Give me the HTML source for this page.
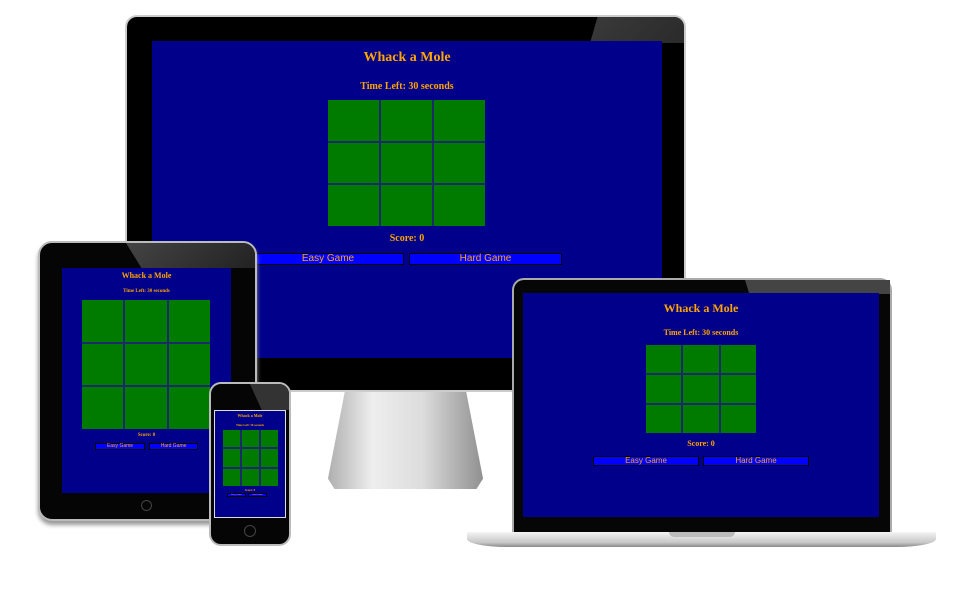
<!DOCTYPE html>
<html><head><meta charset="utf-8"><style>
*{margin:0;padding:0;box-sizing:border-box}
body{width:964px;height:601px;background:#fff;position:relative;overflow:hidden;font-family:"Liberation Serif",serif}
.a{position:absolute}
.scr{position:absolute;background:#00008b;overflow:hidden}
.t{position:absolute;left:0;right:0;text-align:center;color:#ffa500;font-weight:bold;white-space:nowrap}
.g{position:absolute;display:grid;grid-template-columns:1fr 1fr 1fr;grid-template-rows:1fr 1fr 1fr;gap:2px;background:#1a2a6a}
.g div{background:#007b00}
.b{position:absolute;background:#0000ff;color:#ffa500;font-family:"Liberation Sans",sans-serif;text-align:center;white-space:nowrap;border:1px solid #000}
</style></head><body>

<!-- Monitor -->
<div class="a" style="left:323px;top:385px;width:165px;height:104px;background:linear-gradient(90deg,#a8a8a8,#eee 30%,#ddd 60%,#8a8a8a);clip-path:polygon(14% 0,86% 0,97% 90%,93% 100%,7% 100%,3% 90%)"></div>
<div class="a" style="left:125px;top:15px;width:561px;height:377px;background:#000;border:2px solid #ccc;border-radius:12px"></div>
<div class="a" style="left:590px;top:17px;width:94px;height:26px;background:linear-gradient(135deg,#3a3a3a,#2a2a2a);clip-path:polygon(8% 0,100% 0,100% 100%,0 100%);border-radius:0 10px 0 0"></div>
<div class="scr" style="left:152px;top:41px;width:510px;height:317px">
 <div class="t" style="top:9px;font-size:14px">Whack a Mole</div>
 <div class="t" style="top:40px;font-size:10px">Time Left: 30 seconds</div>
 <div class="g" style="left:176px;top:59px;width:157px;height:126px"><div></div><div></div><div></div><div></div><div></div><div></div><div></div><div></div><div></div></div>
 <div class="t" style="top:192px;font-size:10px">Score: 0</div>
 <div class="b" style="left:100px;top:212px;width:152px;height:12px;font-size:10px;line-height:10px">Easy Game</div>
 <div class="b" style="left:257px;top:212px;width:153px;height:12px;font-size:10px;line-height:10px">Hard Game</div>
</div>

<!-- Tablet -->
<div class="a" style="left:38px;top:241px;width:219px;height:280px;background:#050505;border:2px solid #bbb;border-radius:14px;box-shadow:0 4px 4px #999"></div>
<div class="a" style="left:126px;top:243px;width:129px;height:25px;background:linear-gradient(135deg,#444,#222);clip-path:polygon(0 0,100% 0,100% 100%,12% 100%);border-radius:0 12px 0 0"></div>
<div class="scr" style="left:62px;top:268px;width:169px;height:225px">
 <div class="t" style="top:3px;font-size:8px">Whack a Mole</div>
 <div class="t" style="top:21px;font-size:5px">Time Left: 30 seconds</div>
 <div class="g" style="left:20px;top:32px;width:128px;height:129px"><div></div><div></div><div></div><div></div><div></div><div></div><div></div><div></div><div></div></div>
 <div class="t" style="top:165px;font-size:5px">Score: 0</div>
 <div class="b" style="left:33px;top:175px;width:50px;height:7px;font-size:5px;line-height:5px">Easy Game</div>
 <div class="b" style="left:87px;top:175px;width:49px;height:7px;font-size:5px;line-height:5px">Hard Game</div>
</div>
<div class="a" style="left:141px;top:500px;width:11px;height:11px;border:1px solid #444;border-radius:50%"></div>

<!-- Phone -->
<div class="a" style="left:209px;top:382px;width:82px;height:164px;background:#050505;border:2px solid #bbb;border-radius:12px"></div>
<div class="a" style="left:250px;top:384px;width:39px;height:26px;background:#333;clip-path:polygon(0 0,100% 0,100% 100%,30% 100%);border-radius:0 10px 0 0"></div>
<div class="a" style="left:214px;top:410px;width:72px;height:108px;background:#ddd"></div>
<div class="scr" style="left:215px;top:411px;width:70px;height:106px">
 <div class="t" style="top:2px;font-size:4px">Whack a Mole</div>
 <div class="t" style="top:12px;font-size:3px">Time Left: 30 seconds</div>
 <div class="g" style="left:8px;top:19px;width:55px;height:56px"><div></div><div></div><div></div><div></div><div></div><div></div><div></div><div></div><div></div></div>
 <div class="t" style="top:77px;font-size:3px">Score: 0</div>
 <div class="b" style="left:12px;top:82px;width:19px;height:4px;font-size:2px;line-height:2px">Easy Game</div>
 <div class="b" style="left:33px;top:82px;width:19px;height:4px;font-size:2px;line-height:2px">Hard Game</div>
</div>
<div class="a" style="left:244px;top:525px;width:12px;height:12px;border:1px solid #444;border-radius:50%"></div>

<!-- Laptop -->
<div class="a" style="left:512px;top:278px;width:380px;height:254px;background:#060606;border:2px solid #aaa;border-bottom:none;border-radius:12px 12px 0 0"></div>
<div class="a" style="left:745px;top:280px;width:145px;height:14px;background:#444;clip-path:polygon(0 0,100% 0,100% 100%,3% 100%)"></div>
<div class="scr" style="left:523px;top:293px;width:356px;height:224px">
 <div class="t" style="top:8px;font-size:12px">Whack a Mole</div>
 <div class="t" style="top:35px;font-size:8px">Time Left: 30 seconds</div>
 <div class="g" style="left:123px;top:52px;width:110px;height:88px"><div></div><div></div><div></div><div></div><div></div><div></div><div></div><div></div><div></div></div>
 <div class="t" style="top:146px;font-size:8px">Score: 0</div>
 <div class="b" style="left:70px;top:163px;width:106px;height:10px;font-size:8px;line-height:8px">Easy Game</div>
 <div class="b" style="left:180px;top:163px;width:106px;height:10px;font-size:8px;line-height:8px">Hard Game</div>
</div>
<div class="a" style="left:467px;top:532px;width:469px;height:15px;background:linear-gradient(#f4f4f4,#c8c8c8 70%,#888);border-radius:0 0 40px 40px/0 0 8px 8px"></div>
<div class="a" style="left:669px;top:532px;width:66px;height:5px;background:#bbb;border-radius:0 0 5px 5px"></div>
</body></html>
